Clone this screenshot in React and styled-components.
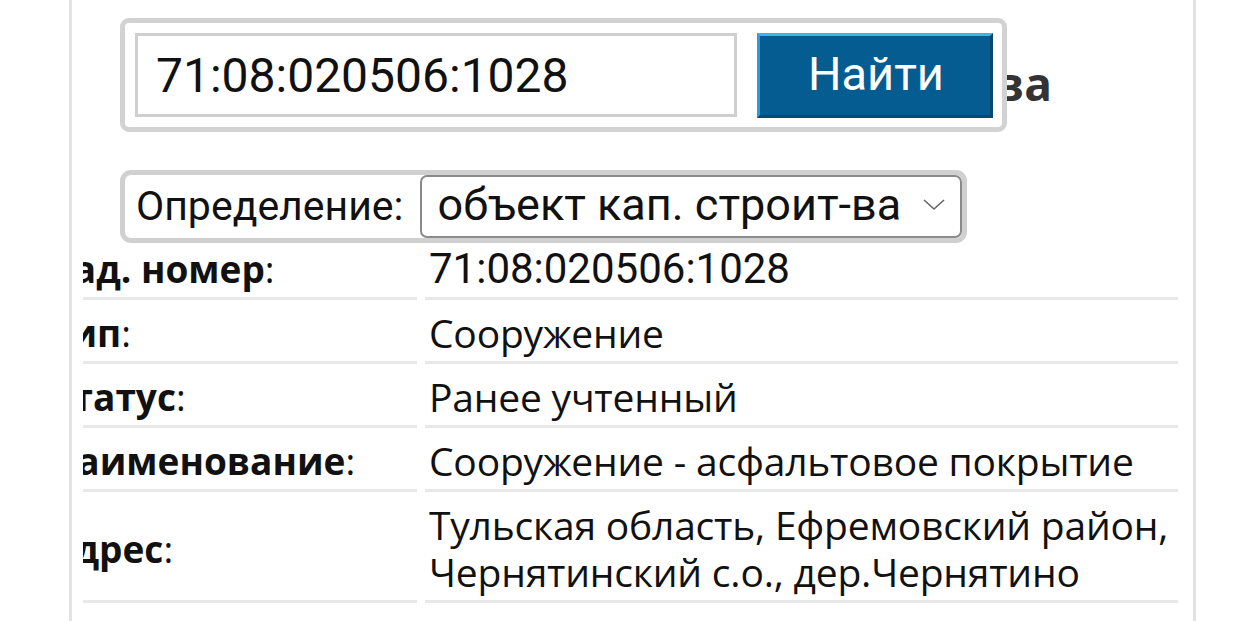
import styled, { createGlobalStyle } from 'styled-components'

const GlobalStyle = createGlobalStyle`
  html, body {
    margin: 0;
    padding: 0;
    background: #fff;
  }
  body {
    font-family: Roboto, "Noto Sans", sans-serif;
    color: #111;
  }
`

const rows = [
  { label: 'Кад. номер', value: '71:08:020506:1028', digits: true },
  { label: 'Тип', value: 'Сооружение' },
  { label: 'Статус', value: 'Ранее учтенный' },
  { label: 'Наименование', value: 'Сооружение - асфальтовое покрытие' },
  { label: 'Адрес', value: 'Тульская область, Ефремовский район, Чернятинский с.о., дер.Чернятино' }
]

export default function App() {
  return (
    <>
      <GlobalStyle />
      <Panel>
        <Heading>Поиск объекта строительства</Heading>

        <Controls>
          <SearchBox>
            <SearchInput defaultValue="71:08:020506:1028" />
            <FindButton type="button">Найти</FindButton>
          </SearchBox>
          <DefineBox>
            <DefineLabel>Определение:</DefineLabel>
            <SelectBox>
              <span>объект кап. строит-ва</span>
              <svg width="24" height="13" viewBox="0 0 24 13">
                <polyline points="2,2 12,11 22,2" fill="none" stroke="#666" strokeWidth="1.6" />
              </svg>
            </SelectBox>
          </DefineBox>
        </Controls>

        <TableClip>
          <InfoTable>
            <tbody>
              {rows.map((row) => (
                <tr key={row.label}>
                  <LabelCell>
                    <b>{row.label}</b>:
                  </LabelCell>
                  <ValueCell $digits={row.digits}>{row.value}</ValueCell>
                </tr>
              ))}
            </tbody>
          </InfoTable>
        </TableClip>
      </Panel>
    </>
  )
}

const Panel = styled.div`
  position: relative;
  box-sizing: border-box;
  margin-left: 69px;
  width: 1127px;
  min-height: 100vh;
  border-left: 3px solid #e3e3e3;
  border-right: 3px solid #e3e3e3;
  padding: 0 15px 0 11px;
  overflow: hidden;
`

const Heading = styled.h2`
  margin: 0;
  padding: 52px 126px 0 0;
  height: 236px;
  box-sizing: border-box;
  text-align: right;
  font-family: "Open Sans", Lato, sans-serif;
  font-weight: 700;
  font-size: 46px;
  line-height: 62px;
  color: #333;
  white-space: nowrap;
`

const Controls = styled.div`
  position: absolute;
  left: 48px;
  top: 18px;
  display: flex;
  flex-direction: column;
  gap: 38px;
`

const SearchBox = styled.div`
  box-sizing: border-box;
  width: 887px;
  height: 114px;
  display: flex;
  gap: 20px;
  padding: 10px 9px 9px 10px;
  background: #fff;
  border: 5px solid #d2d2d2;
  border-radius: 9px;
`

const SearchInput = styled.input`
  box-sizing: border-box;
  width: 602px;
  height: 84px;
  border: 3px solid #cfcfcf;
  padding: 0 18px;
  font-family: Roboto, sans-serif;
  font-size: 48px;
  color: #111;
  outline: none;
  background: #fff;
`

const FindButton = styled.button`
  box-sizing: border-box;
  width: 236px;
  height: 85px;
  padding: 0 0 4px 48px;
  background: #045c91;
  border: 3px solid;
  border-color: #3cb2ee #0a4870 #0a4870 #2d9bd8;
  color: #fff;
  font-family: Roboto, sans-serif;
  font-size: 47px;
  text-align: left;
`

const DefineBox = styled.div`
  box-sizing: border-box;
  width: 847px;
  height: 73px;
  display: flex;
  align-items: stretch;
  gap: 16px;
  padding-left: 11px;
  background: #fff;
  border: 5px solid #d0d0d0;
  border-radius: 11px;
`

const DefineLabel = styled.span`
  display: flex;
  align-items: center;
  font-family: Roboto, sans-serif;
  font-size: 41px;
  color: #111;
  padding-bottom: 2px;
`

const SelectBox = styled.div`
  box-sizing: border-box;
  flex: 1;
  display: flex;
  align-items: center;
  justify-content: space-between;
  padding: 0 14px 4px 16px;
  border: 2px solid #8a8a8a;
  border-radius: 7px;
  font-family: Roboto, sans-serif;
  font-size: 45px;
  color: #111;
  background: #fff;
`

const TableClip = styled.div`
  overflow: hidden;
`

const InfoTable = styled.table`
  margin-left: -42px;
  width: calc(100% + 50px);
  border-collapse: separate;
  border-spacing: 8px 0;
  font-family: "Open Sans", Lato, sans-serif;
  color: #111;
`

const LabelCell = styled.td`
  width: 368px;
  padding: 9px 0 5px;
  line-height: 47px;
  font-size: 37px;
  vertical-align: middle;
  white-space: nowrap;
  border-bottom: 3px solid #e8e8e8;
  font-weight: 400;
  & b {
    font-weight: 700;
  }
`

const ValueCell = styled.td`
  padding: 9px 0 5px 4px;
  line-height: 47px;
  vertical-align: middle;
  border-bottom: 3px solid #e8e8e8;
  font-family: ${(p) => (p.$digits ? 'Roboto, sans-serif' : '"Open Sans", Lato, sans-serif')};
  font-size: ${(p) => (p.$digits ? '42px' : '39px')};
  letter-spacing: ${(p) => (p.$digits ? '0' : '-0.2px')};
`
